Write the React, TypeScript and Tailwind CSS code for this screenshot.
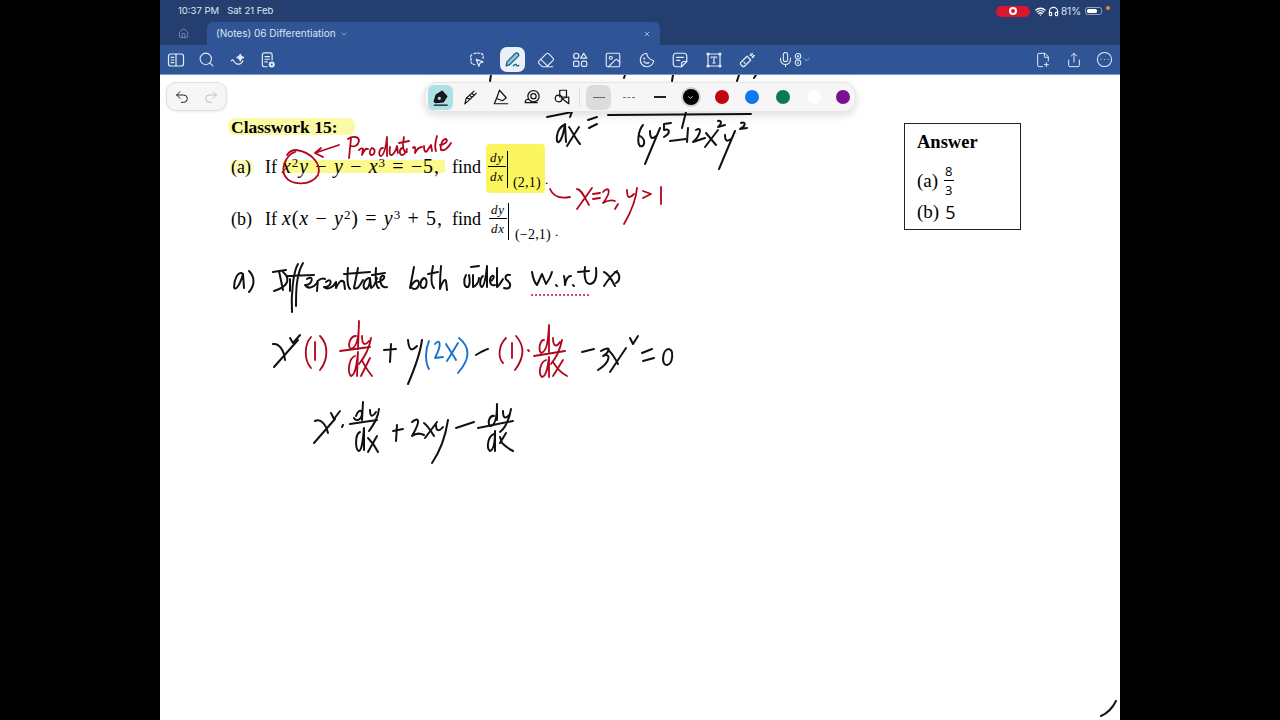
import React from "react";
import { House, Search, Eraser, Image, Mic, FilePlus2, Share, CircleEllipsis, Undo2, Redo2, Wifi, Headphones, X, ChevronDown } from "lucide-react";

const BLACK = [
  "M491 75 L490 81", "M625 75 L624 78", "M673 75 L672 81", "M739 75 L737 81", "M756 75 L754 78",
  "M547 117 L572 112 M568 111 L572 112 L570 117",
  "M564 125 C558 128 556 136 557 141 C559 145 563 138 565 124 L566 142",
  "M569 127 C572 131 575 138 580 144 M579 127 L567 146",
  "M588 120 L597 117 M589 128 L597 124",
  "M608 115 L751 114",
  "M686 112 L682 128",
  "M643 125 C638 131 637 143 640 146 C644 148 647 140 640 136",
  "M650 131 C650 138 652 140 656 136 M660 128 L645 164",
  "M671 123 L664 124 L664 130 C670 128 671 133 664 137",
  "M670 141 L686 139", "M688 128 L687 142", "M696 130 C703 126 700 136 693 142 L705 138",
  "M706 133 L716 145 M718 130 L705 147", "M718 121 C722 120 722 124 718 127 L725 125",
  "M725 135 C725 141 727 142 731 139 M735 131 L719 169", "M741 123 C747 121 745 127 740 129 L747 128",
  "M243 274 C238 270 234 280 234 287 C235 292 240 285 243 274 L244 288", "M249 271 C255 277 255 285 249 292",
  "M273 272 L286 270 M279 271 L283 290 M283 272 C290 278 290 286 274 291",
  "M290 279 L290 291",
  "M298 264 C293 272 291 296 292 312 M303 263 C296 275 296 292 296 306 M287 276 L314 275",
  "M307 279 C315 274 312 286 305 285 C308 290 314 287 317 283 C318 280 318 278 317 291 M319 280 C322 278 323 278 325 279",
  "M326 282 C333 276 332 288 324 287 C327 290 333 288 336 282 L336 288 C339 282 341 279 344 282 L345 289",
  "M348 268 C347 278 347 286 350 289 M344 274 L370 272",
  "M358 268 L354 288 C358 290 360 285 363 280",
  "M369 278 C363 280 362 289 366 289 C369 288 370 282 370 278 L371 288 C373 288 375 284 377 278",
  "M376 268 C375 278 376 288 379 288 M372 275 L385 273",
  "M378 282 C385 280 386 275 382 276 C379 278 380 289 387 287",
  "M414 267 L410 288 C414 280 419 278 419 284 C418 290 413 290 411 287",
  "M424 278 C420 280 419 288 423 288 C427 288 428 279 424 278",
  "M433 266 C431 276 431 285 434 288 M428 274 L438 272",
  "M441 266 C440 276 440 283 440 289 C442 282 445 278 446 281 L447 290",
  "M471 267 L479 266 M466 275 C463 280 464 288 468 287 C470 285 470 280 469 275",
  "M473 275 L473 287 C476 286 479 282 479 278",
  "M483 276 C480 278 479 286 482 287 C485 285 486 276 487 266 L487 287",
  "M490 281 C494 280 495 275 492 276 C489 278 489 287 495 285",
  "M497 268 L497 287 C499 286 501 282 503 279",
  "M510 275 C505 274 504 279 508 281 C512 285 510 290 504 288",
  "M532 272 C533 278 535 283 537 285 L542 274 L546 284 C549 280 551 276 552 272",
  "M556 285 L557 286", "M564 276 C565 279 565 282 565 285 C566 279 568 276 571 276", "M573 285 L574 286",
  "M585 267 C584 276 585 284 590 284 C595 283 597 277 596 268 M578 272 L589 271",
  "M604 272 C609 274 612 280 615 286 M617 271 C612 274 608 280 604 286 M615 272 C620 272 621 280 616 283",
  "M273 344 C279 343 284 350 285 360 M298 340 L274 367",
  "M290 338 L293 343 L300 335",
  "M384 350 L396 349 M391 344 L390 362",
  "M408 340 C409 350 411 352 417 346 M422 340 C420 355 414 370 408 384",
  "M476 355 C481 352 484 350 488 349",
  "M582 352 L594 349", "M601 351 C609 346 613 349 603 356 C611 352 611 362 598 370",
  "M608 350 C612 353 615 358 618 364 M626 348 L610 372",
  "M630 338 L633 344 L638 336",
  "M642 353 L652 349 M643 361 L654 358",
  "M669 349 C662 349 661 366 667 365 C673 364 674 350 669 349",
  "M315 421 C321 418 326 425 328 433 M335 419 L314 443",
  "M331 413 L334 419 L340 411",
  "M343 425 L342 427",
  "M354 418 C356 422 362 420 362 413 C361 408 357 412 356 416 M363 402 L362 420 M370 410 C370 416 372 418 376 412 M379 409 C378 418 374 424 369 431",
  "M350 424 L377 420",
  "M360 432 C355 434 355 450 359 451 C362 450 363 440 364 428 L364 450",
  "M368 438 C372 442 375 446 378 452 M377 436 L368 452",
  "M393 431 L403 429 M397 425 L396 441",
  "M412 422 C418 417 422 419 412 436 C416 433 420 433 424 435",
  "M424 423 C428 426 431 431 434 436 M437 422 L425 438",
  "M436 425 C436 431 439 432 443 427 M448 420 C446 433 441 450 432 463",
  "M456 428 L474 422",
  "M494 416 C490 415 487 422 490 426 C494 426 497 420 497 404 L497 420 M503 411 C503 418 505 420 510 414 M511 409 C509 420 505 428 500 432",
  "M478 428 L513 421",
  "M494 434 C488 436 486 448 490 451 C494 450 495 442 495 431 L495 451",
  "M500 437 L502 443 C505 446 509 449 513 451 M506 433 L500 443",
  "M1101 716 C1108 713 1112 709 1116 701",
];

const RED = [
  "M295 152 C285 155 281 170 285 176 C291 186 311 186 318 175 C322 165 312 152 296 150 C292 150 289 152 287 155",
  "M339 145 L315 153 M321 148 L315 153 L323 157",
  "M348 139 C352 136 359 136 359 141 C358 146 354 147 351 146 M351 138 L349 158",
  "M359 150 C361 148 362 148 363 149 L362 155 C364 150 366 148 368 149",
  "M372 148 C369 150 369 155 372 155 C375 154 376 149 372 148",
  "M383 148 C379 148 378 156 381 156 C384 155 386 146 387 137 L387 156",
  "M390 147 C389 153 390 156 392 155 C395 153 396 150 397 146 L398 153",
  "M403 148 C399 148 399 155 402 155 C405 155 406 152 407 149",
  "M404 137 C402 145 403 153 407 152 M399 143 L409 141",
  "M413 148 C414 146 416 146 415 153 C417 149 419 147 422 147",
  "M424 146 C424 151 425 153 427 151 L431 145 L432 151",
  "M437 136 C435 143 435 149 436 151",
  "M440 145 C444 145 449 141 446 139 C442 139 440 146 441 150 C444 151 448 148 451 143",
  "M550 189 C553 196 560 199 570 197",
  "M577 189 C581 189 584 196 589 205 M592 188 L577 209",
  "M593 194 L600 193 M593 199 L600 198",
  "M603 192 C608 186 613 190 603 203 C608 200 612 200 615 201",
  "M618 204 L615 209",
  "M627 190 C627 198 629 199 634 194 M637 188 C636 200 631 212 624 224",
  "M643 191 L651 194 L643 198",
  "M661 187 L661 204",
  "M311 337 C304 345 304 360 311 368", "M315 342 L315 360", "M320 336 C329 345 328 360 320 370",
  "M356 336 C350 336 347 346 351 349 C356 348 359 340 359 321 L358 349 M362 336 C362 345 365 346 369 341 M371 338 C369 350 364 358 359 364",
  "M340 351 L370 347",
  "M355 356 C349 358 347 372 351 376 C356 375 357 362 358 352 L357 376",
  "M362 360 C364 365 368 371 372 376 M370 358 L361 376",
  "M506 338 C498 346 498 358 503 363", "M512 343 L512 358", "M516 336 C525 346 524 358 515 370",
  "M528 350 L529 351",
  "M544 340 C540 340 538 349 541 353 C546 352 548 345 549 325 L549 352 M553 338 C553 346 556 348 560 342 M562 340 C560 350 556 358 551 364",
  "M534 356 L565 351",
  "M546 360 C540 362 538 374 542 377 C547 376 548 365 549 357 L549 377",
  "M553 362 C556 367 561 373 567 376 M563 360 L553 376",
];

const BLUE = [
  "M429 341 C425 350 425 362 429 369",
  "M435 344 C439 339 443 342 435 358 L443 357",
  "M446 344 C449 349 453 355 456 360 M458 343 L447 361",
  "M459 338 C470 347 471 358 458 373",
];

function Ink() {
  return (
    <svg className="absolute inset-0 w-full h-full pointer-events-none" viewBox="160 75 960 645" fill="none" strokeLinecap="round" strokeLinejoin="round">
      <g stroke="#111" strokeWidth="2">{BLACK.map((d, i) => <path key={i} d={d} />)}</g>
      <g stroke="#b0061c" strokeWidth="1.800">{RED.map((d, i) => <path key={i} d={d} />)}</g>
      <g stroke="#1874d2" strokeWidth="1.900">{BLUE.map((d, i) => <path key={i} d={d} />)}</g>
      <path d="M532 295 L592 295" stroke="#c8102e" strokeWidth="1.900" strokeDasharray="0.1 3.900" />
    </svg>
  );
}

function Frac({ top, bottom, cls = "" }: { top: string; bottom: string; cls?: string }) {
  return (
    <span className={"inline-flex flex-col items-center leading-none " + cls}>
      <span className="px-[2px] pb-[2px] border-b border-black">{top}</span>
      <span className="px-[2px] pt-[3px]">{bottom}</span>
    </span>
  );
}

function Printed() {
  const math = "text-[20px] tracking-[0.9px] [word-spacing:0.5px]";
  const sup = "text-[13px] not-italic";
  return (
    <div className="absolute inset-0 font-['Liberation_Serif',serif] text-black">
      <div className="absolute left-[68px] top-[43px] w-[127px] h-[17px] rounded-[7px] bg-[#fcfaa6]" />
      <div className="absolute left-[70px] top-[85px] w-[23px] h-[14px] rounded-[3px] bg-[#fdfcb8]" />
      <div className="absolute left-[123px] top-[85px] w-[162px] h-[13px] rounded-[3px] bg-[#fcfa8c]" />
      <div className="absolute left-[326px] top-[69px] w-[59px] h-[49px] rounded-[4px] bg-[#fbf65f]" />

      <div className="absolute left-[71px] top-[42px] text-[17.500px] leading-[20px] font-bold whitespace-nowrap">Classwork 15:</div>

      <div className="absolute left-[71px] top-[80px] h-[22px] flex items-baseline text-[18px] leading-[22px] whitespace-nowrap">
        <span className="w-[34px]">(a)</span>
        <span className="w-[17px]">If</span>
        <span className={math + " w-[170px]"}><i>x</i><sup className={sup}>2</sup><i>y</i> − <i>y</i> − <i>x</i><sup className={sup}>3</sup> = −5,</span>
        <span>find</span>
      </div>
      <div className="absolute left-[328px] top-[76px] flex items-start">
        <Frac top="dy" bottom="dx" cls="text-[13px] italic tracking-[0.8px]" />
        <span className="ml-[1px] w-[1px] h-[37px] bg-black" />
      </div>
      <div className="absolute left-[353px] top-[100px] text-[14px] tracking-[0.2px] leading-[15px]">(2,1)</div>
      <div className="absolute left-[385px] top-[97px] text-[13px] leading-[15px]">.</div>

      <div className="absolute left-[71px] top-[132px] h-[22px] flex items-baseline text-[18px] leading-[22px] whitespace-nowrap">
        <span className="w-[34px]">(b)</span>
        <span className="w-[17px]">If</span>
        <span className={math + " w-[170px]"}><i>x</i>(<i>x</i> − <i>y</i><sup className={sup}>2</sup>) = <i>y</i><sup className={sup}>3</sup> + 5,</span>
        <span>find</span>
      </div>
      <div className="absolute left-[329px] top-[128px] flex items-start">
        <Frac top="dy" bottom="dx" cls="text-[13px] italic tracking-[0.8px]" />
        <span className="ml-[1px] w-[1px] h-[37px] bg-black" />
      </div>
      <div className="absolute left-[355px] top-[152px] text-[14px] tracking-[0.2px] leading-[15px]">(−2,1)</div>
      <div className="absolute left-[395px] top-[149px] text-[13px] leading-[15px]">.</div>

      <div className="absolute left-[744px] top-[48px] w-[117px] h-[107px] border border-[#222] pl-[12px] pt-[8px]">
        <div className="text-[18.500px] leading-[20px] font-bold">Answer</div>
        <div className="mt-[9px] flex items-center text-[19px] leading-[22px] h-[40px]">
          <span>(a)</span>
          <span className="ml-[6px] inline-flex flex-col items-center text-[13px] font-['Open_Sans',sans-serif]">
            <span className="px-[1px] border-b border-black leading-[17px]">8</span>
            <span className="leading-[18px]">3</span>
          </span>
        </div>
        <div className="flex items-center text-[19px] leading-[22px]">
          <span>(b)</span>
          <span className="ml-[6px] font-['Open_Sans',sans-serif] text-[18px]">5</span>
        </div>
      </div>
    </div>
  );
}

const S = "w-[18px] h-[18px]";

function Ic({ children, className = S }: { children: React.ReactNode; className?: string }) {
  return (
    <svg viewBox="0 0 24 24" className={className} fill="none" stroke="currentColor" strokeWidth="1.6" strokeLinecap="round" strokeLinejoin="round">{children}</svg>
  );
}

function TopLeftIcons() {
  return (
    <div className="flex items-center text-[#e4ebf6]">
      <div className="w-[31px] flex justify-center">
        <Ic><rect x="2" y="4" width="20" height="16" rx="3" /><path d="M12 4v16M5.500 8.500h3.500M5.500 12h3.500M5.500 15.500h3.500" /></Ic>
      </div>
      <div className="w-[31px] flex justify-center"><Search className="w-[17px] h-[17px]" strokeWidth={1.5} /></div>
      <div className="w-[31px] flex justify-center">
        <Ic><path d="M3 13l2-1.500 1.500 2C8 17 12 18.500 15 17c2-1 3-2.500 3.500-4" /><path d="M15 4.500l1.500 3 3 1-3 1.500-1.500 3-1.500-3-3-1.500 3-1 1.500-3z" fill="currentColor" /></Ic>
      </div>
      <div className="w-[29px] flex justify-center">
        <Ic><path d="M11 21H7a2.500 2.500 0 0 1-2.500-2.500V5A2.500 2.500 0 0 1 7 2.500h8A2.500 2.500 0 0 1 17.500 5v7" /><path d="M8 7.500h6M8 11h6M8 14.500h3" /><circle cx="17" cy="18" r="4" fill="currentColor" stroke="none" /><circle cx="17" cy="18" r="1.300" fill="#2f5597" stroke="none" /></Ic>
      </div>
    </div>
  );
}

function Cell({ children, active = false, cls = "" }: { children: React.ReactNode; active?: boolean; cls?: string }) {
  return (
    <div className={"w-[33.500px] h-[25px] flex items-center justify-center " + cls}>
      {active ? <div className="w-[25px] h-[25px] rounded-[7px] bg-[#e9f0f8] flex items-center justify-center text-[#1d5c86]">{children}</div> : children}
    </div>
  );
}

function CenterIcons() {
  return (
    <div className="flex items-center text-[#e4ebf6]">
      <Cell>
        <Ic><path d="M8 3.500c3-1 9-1 11 .5 1.500 1.500 1.500 4 1 6M5 5C3 6.500 3 9 4.500 11 3.500 13 3.500 15 5 16.500c1 1 2.500 1.500 4 1.500" strokeDasharray="3 2" /><path d="M11 11l9 3.500-4 1.500-1.500 4.500L11 11z" /></Ic>
      </Cell>
      <Cell active cls="ml-[2.500px]">
        <Ic className="w-[19px] h-[19px]"><path d="M5 15L15.500 4.500a2.300 2.300 0 0 1 3.500 3.500L8.500 18.500 4 20l1-5z" fill="#8ccbd6" /><path d="M13 20c2-2 3.500-2.500 4-1s1 1.500 3 .5" /></Ic>
      </Cell>
      <Cell><Eraser className="w-[18px] h-[18px]" strokeWidth={1.5} /></Cell>
      <Cell>
        <Ic><circle cx="7" cy="6.500" r="3.500" /><path d="M17 3l4 6.500h-8L17 3z" /><rect x="3.500" y="13.500" width="7" height="7" rx="1.500" /><rect x="14" y="13.500" width="7" height="7" rx="2" /></Ic>
      </Cell>
      <Cell><Image className="w-[18px] h-[18px]" strokeWidth={1.5} /></Cell>
      <Cell>
        <Ic><path d="M21 13a9 9 0 1 1-9.500-10c.500 4 2 8 9.500 10z" /><path d="M8 14c1 2 4 3 6.500 1.500" /><circle cx="8.500" cy="10" r="0.600" /></Ic>
      </Cell>
      <Cell>
        <Ic><path d="M14 21H7a4 4 0 0 1-4-4V7a4 4 0 0 1 4-4h10a4 4 0 0 1 4 4v7l-7 7z" /><path d="M14 21v-4a3 3 0 0 1 3-3h4" /><path d="M7.500 8.500h9M7.500 12.500h4" /></Ic>
      </Cell>
      <Cell>
        <Ic><rect x="4" y="4" width="16" height="16" /><path d="M8.500 9V8h7v1M12 8v8M10.500 16h3" /><circle cx="4" cy="4" r="1.300" fill="currentColor" /><circle cx="20" cy="4" r="1.300" fill="currentColor" /><circle cx="4" cy="20" r="1.300" fill="currentColor" /><circle cx="20" cy="20" r="1.300" fill="currentColor" /></Ic>
      </Cell>
      <Cell>
        <Ic><path d="M4 15l8-8 5 5-8 8c-1 1-2.500 1-3.500 0L4 18.500C3 17.500 3 16 4 15z" /><path d="M8 15l1.500 1.500" /><path d="M19 3v1.500M19 7.500V9M16 6h1.500M20.500 6H22M17 4l1 1M21 8l-1-1" /></Ic>
      </Cell>
      <div className="ml-[13px] flex items-center">
        <Mic className="w-[17px] h-[17px]" strokeWidth={1.5} />
        <svg viewBox="0 0 10 18" className="w-[8px] h-[15px]" fill="none" stroke="currentColor" strokeWidth="1.300"><circle cx="5" cy="5" r="3.500" /><path d="M3.500 5h3M5 3.500v3" /><circle cx="5" cy="13" r="3.500" /><path d="M5 11.500v3" /></svg>
        <ChevronDown className="w-[11px] h-[11px] -ml-[1px] text-[#b9c8e0]" strokeWidth={1.5} />
      </div>
    </div>
  );
}

function Pens() {
  const cell = "w-[30.500px] h-[26px] shrink-0 flex items-center justify-center";
  return (
    <>
      <div className={cell}>
        <div className="w-[25px] h-[25px] rounded-[6px] bg-[#aee0e7] flex items-center justify-center">
          <Ic className="w-[19px] h-[19px]"><path d="M4 17l2.500-8L14 4l6 6.500-4.500 7L6 18.500z" fill="#1a1a1a" /><circle cx="10.500" cy="13" r="2" fill="#aee0e7" stroke="none" /><path d="M4 21.500h16.500" /></Ic>
        </div>
      </div>
      <div className={cell}><Ic className="w-[17px] h-[17px]"><path d="M4 21l2-8L17 3M6 13l6 1 8-8M14 6l3 3M11 9l3 3M4 21l8-7" /></Ic></div>
      <div className={cell}><Ic className="w-[18px] h-[18px]"><path d="M10 3l-4 11 8 3 5-4L10 3z" /><path d="M6 14l-3 7h18" /></Ic></div>
      <div className={cell}><Ic className="w-[18px] h-[18px]"><circle cx="14" cy="11" r="7.500" /><circle cx="14" cy="11" r="3.500" /><path d="M3 19c0-3 2-4 4-4M3 19.500h16" /></Ic></div>
      <div className={cell}><Ic className="w-[18px] h-[18px]"><rect x="9" y="3" width="9" height="9" /><circle cx="7.500" cy="14" r="4.500" /><path d="M12 14l9-2v9l-9-7z" /></Ic></div>
    </>
  );
}

function Palette() {
  const cell = "w-[30.750px] h-[26px] shrink-0 flex items-center justify-center";
  return (
    <div className="absolute left-[264px] top-[7px] w-[432px] h-[30px] rounded-[13px] bg-[#f6f6f6] border border-[#e6e6e6] shadow-[0_3px_8px_rgba(0,0,0,0.14)] flex items-center z-10 text-[#111]">
      <Pens />
      <div className="w-[1px] h-[19px] bg-[#dedede] ml-[1.500px] mr-[6px] shrink-0" />
      <div className="w-[25px] h-[25px] rounded-[7px] bg-[#dcdcdc] shrink-0 flex items-center justify-center"><span className="w-[12px] h-[1px] bg-[#666]" /></div>
      <div className={cell + " ml-[3px]"}><span className="w-[12px] border-t border-dashed border-[#777]" /></div>
      <div className={cell}><span className="w-[12px] h-[2px] bg-[#222]" /></div>
      <div className={cell}>
        <span className="w-[20px] h-[20px] rounded-full bg-black border-[2px] border-[#d0d0d0] flex items-center justify-center">
          <ChevronDown className="w-[7px] h-[7px] text-white" strokeWidth={3} />
        </span>
      </div>
      <div className={cell}><span className="w-[14px] h-[14px] rounded-full bg-[#c1040f]" /></div>
      <div className={cell}><span className="w-[14px] h-[14px] rounded-full bg-[#0f78ea]" /></div>
      <div className={cell}><span className="w-[14px] h-[14px] rounded-full bg-[#0a7a50]" /></div>
      <div className={cell}><span className="w-[14px] h-[14px] rounded-full bg-white" /></div>
      <div className="w-[22px] h-[26px] shrink-0 flex items-center pl-[7px]"><span className="w-[14px] h-[14px] rounded-full bg-[#7a1191]" /></div>
    </div>
  );
}

export default function App() {
  return (
    <div className="w-[1280px] h-[720px] bg-black flex justify-center overflow-hidden font-['Inter',sans-serif]">
      <div className="w-[960px] h-full flex flex-col bg-white">
        <div className="h-[22px] bg-[#243f6f] flex items-center justify-between pl-[18px] pr-[10px] text-[9.500px] text-[#dde5f1]">
          <div className="flex gap-[8px]">
            <span>10:37 PM</span>
            <span>Sat 21 Feb</span>
          </div>
          <div className="flex items-center">
            <div className="w-[34px] h-[11px] rounded-full bg-[#d9182f] flex items-center justify-center">
              <span className="w-[8px] h-[8px] rounded-full border-[2px] border-white bg-[#d9182f]" />
            </div>
            <Wifi className="w-[11px] h-[11px] ml-[5px] text-white" strokeWidth={3} />
            <Headphones className="w-[11px] h-[11px] ml-[2px] text-white" strokeWidth={2.500} />
            <span className="ml-[2px] text-[10px]">81%</span>
            <div className="ml-[4px] w-[17px] h-[8px] rounded-[2.500px] border border-[#8ea2c4] p-[1px]">
              <div className="w-[80%] h-full rounded-[1.500px] bg-white" />
            </div>
            <span className="ml-[4px] mb-[6px] w-[4px] h-[4px] rounded-full bg-[#e8893a]" />
          </div>
        </div>
        <div className="h-[23px] bg-[#243f6f] flex items-stretch">
          <div className="w-[47px] flex items-center justify-center text-[#8ea2c4] pr-[1px]">
            <House className="w-[11px] h-[11px]" strokeWidth={1.500} />
          </div>
          <div className="w-[453px] bg-[#2f5597] rounded-t-[6px] flex items-center pl-[9px] pr-[9px] text-[10px] text-[#dde5f1]">
            <span>(Notes) 06 Differentiation</span>
            <ChevronDown className="w-[8px] h-[8px] ml-[4px] text-[#c6d3e8]" strokeWidth={2} />
            <X className="w-[8px] h-[8px] ml-auto text-[#dde5f1]" strokeWidth={2} />
          </div>
        </div>
        <div className="h-[30px] bg-[#2f5597] flex items-center border-b border-[#7d9ac6]">
          <TopLeftIcons />
          <div className="ml-[178px]"><CenterIcons /></div>
          <div className="ml-auto flex items-center text-[#e4ebf6]">
            <div className="w-[31px] flex justify-center"><FilePlus2 className="w-[16px] h-[16px]" strokeWidth={1.500} /></div>
            <div className="w-[31px] flex justify-center"><Share className="w-[16px] h-[16px]" strokeWidth={1.500} /></div>
            <div className="w-[31px] flex justify-center"><CircleEllipsis className="w-[17px] h-[17px]" strokeWidth={1.500} /></div>
          </div>
        </div>
        <div className="relative flex-1 bg-white overflow-hidden">
          <Printed />
          <Ink />
          <div className="absolute left-[6px] top-[7px] w-[61px] h-[29px] rounded-[10px] bg-[#f6f6f6] border border-[#e0e0e0] shadow-[0_1px_3px_rgba(0,0,0,0.08)] flex items-center justify-between px-[7px] z-10">
            <Undo2 className="w-[16px] h-[16px] text-[#222]" strokeWidth={1.500} />
            <Redo2 className="w-[16px] h-[16px] text-[#bdbdbd]" strokeWidth={1.500} />
          </div>
          <Palette />
        </div>
      </div>
    </div>
  );
}
